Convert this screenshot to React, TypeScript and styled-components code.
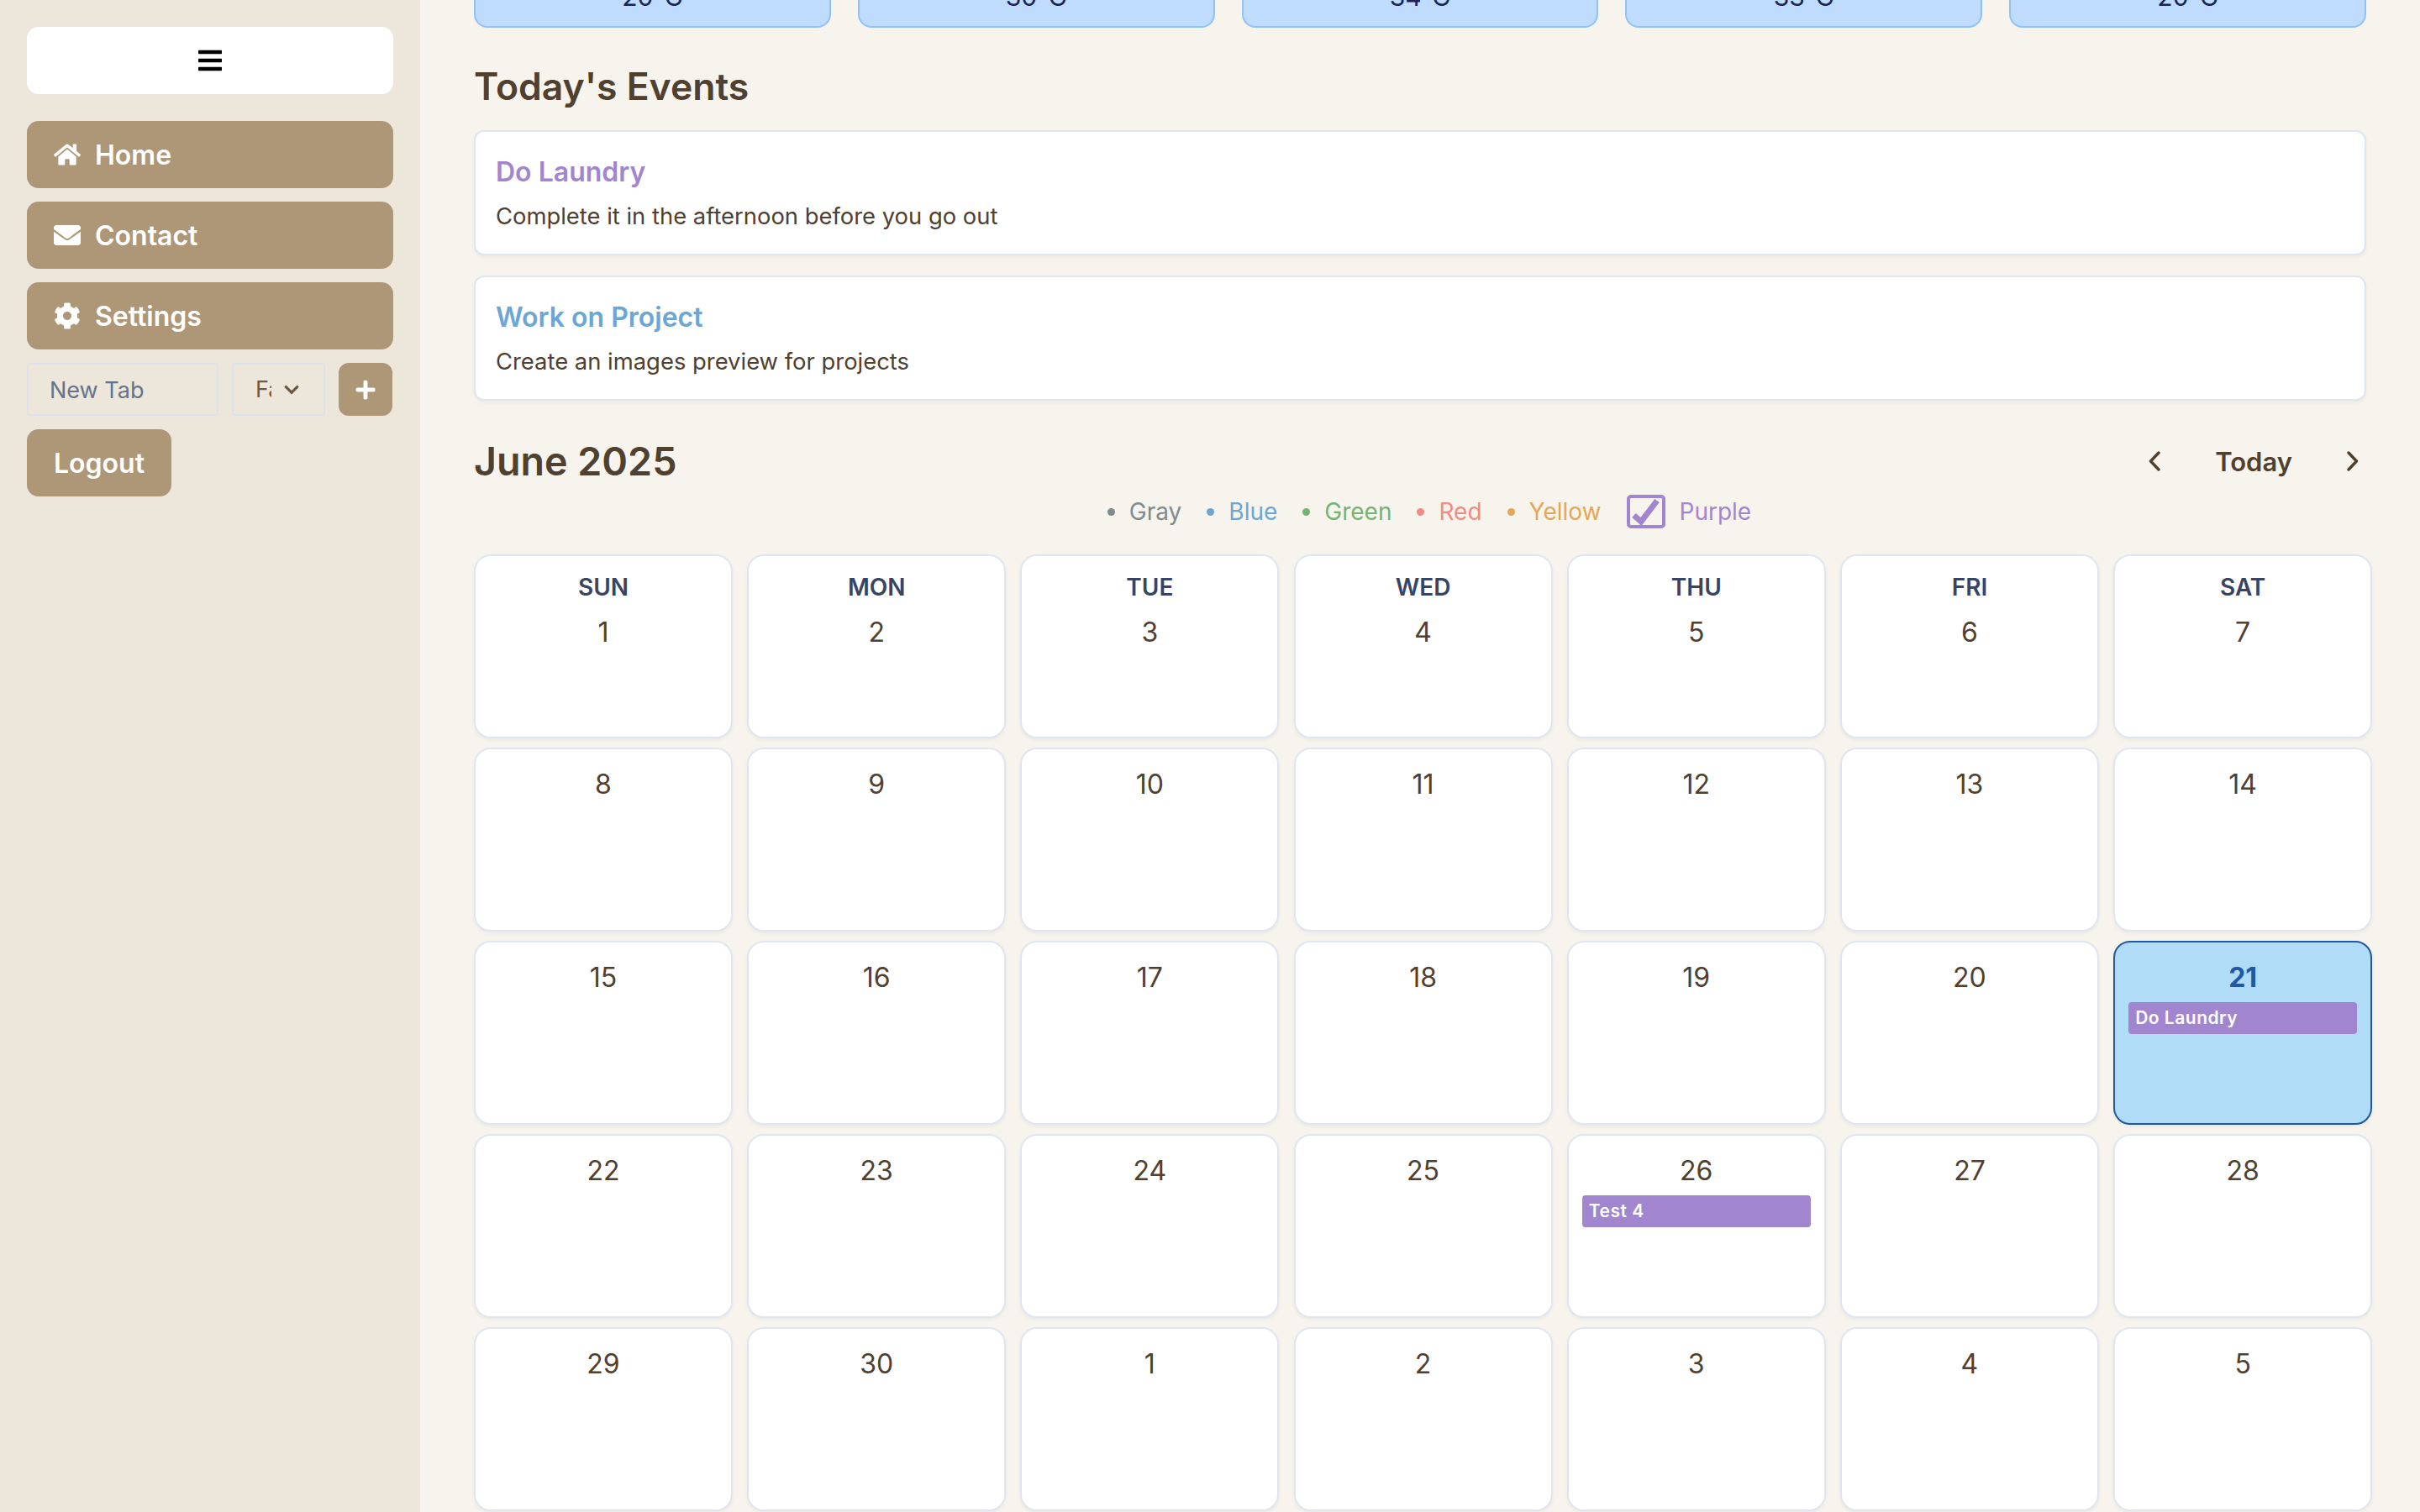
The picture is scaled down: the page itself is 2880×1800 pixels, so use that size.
import { useLayoutEffect, useRef } from 'react'
import styled, { createGlobalStyle } from 'styled-components'
import { FaBars, FaChevronDown, FaCog, FaEnvelope, FaHome, FaPlus } from 'react-icons/fa'

const COLORS: Record<string, string> = {
  gray: '#7f8c8d',
  blue: '#6ca6d4',
  green: '#75b374',
  red: '#f28b82',
  yellow: '#e3a857',
  purple: '#a285cf',
}

const NAV_ITEMS = [
  { label: 'Home', icon: <FaHome /> },
  { label: 'Contact', icon: <FaEnvelope /> },
  { label: 'Settings', icon: <FaCog /> },
]

const TEMPS = ['20°C', '30°C', '34°C', '33°C', '20°C']

const EVENTS = [
  { title: 'Do Laundry', body: 'Complete it in the afternoon before you go out', color: 'purple' },
  { title: 'Work on Project', body: 'Create an images preview for projects', color: 'blue' },
]

const LEGEND = [
  { label: 'Gray', color: 'gray' },
  { label: 'Blue', color: 'blue' },
  { label: 'Green', color: 'green' },
  { label: 'Red', color: 'red' },
  { label: 'Yellow', color: 'yellow' },
]

const WEEKDAYS = ['SUN', 'MON', 'TUE', 'WED', 'THU', 'FRI', 'SAT']

const DAYS = [
  1, 2, 3, 4, 5, 6, 7, 8, 9, 10, 11, 12, 13, 14, 15, 16, 17, 18, 19, 20, 21, 22, 23, 24, 25, 26, 27, 28, 29, 30, 1, 2,
  3, 4, 5,
]

const BARS: Record<number, string> = { 20: 'Do Laundry', 25: 'Test 4' }

function Chevron({ direction }: { direction: 'left' | 'right' }) {
  return (
    <ChevronIcon viewBox="0 0 14 24" aria-hidden="true">
      <path d={direction === 'left' ? 'M12 2L2.5 12L12 22' : 'M2 2L11.5 12L2 22'} />
    </ChevronIcon>
  )
}

export default function App() {
  const mainRef = useRef<HTMLElement>(null)

  // the reference is scrolled down past most of the weather row
  useLayoutEffect(() => {
    if (mainRef.current) mainRef.current.scrollTop = 200
  }, [])

  return (
    <>
      <GlobalStyle />
      <Layout>
        <Sidebar>
          <ToggleButton>
            <FaBars />
          </ToggleButton>
          {NAV_ITEMS.map((item) => (
            <NavButton key={item.label}>
              <NavIcon>{item.icon}</NavIcon>
              {item.label}
            </NavButton>
          ))}
          <TabRow>
            <TabInput placeholder="New Tab" readOnly />
            <IconSelect>
              <SelectText>Fa</SelectText>
              <FaChevronDown />
            </IconSelect>
            <AddButton>
              <FaPlus />
            </AddButton>
          </TabRow>
          <LogoutButton>Logout</LogoutButton>
        </Sidebar>
        <Main ref={mainRef}>
          <WeatherRow>
            {TEMPS.map((temp, i) => (
              <WeatherCard key={i}>{temp}</WeatherCard>
            ))}
          </WeatherRow>
          <SectionTitle>Today's Events</SectionTitle>
          <EventList>
            {EVENTS.map((event) => (
              <EventCard key={event.title}>
                <EventTitle $color={COLORS[event.color]}>{event.title}</EventTitle>
                <EventBody>{event.body}</EventBody>
              </EventCard>
            ))}
          </EventList>
          <CalendarHeader>
            <MonthTitle>June 2025</MonthTitle>
            <CalendarNav>
              <Chevron direction="left" />
              <TodayLabel>Today</TodayLabel>
              <Chevron direction="right" />
            </CalendarNav>
          </CalendarHeader>
          <Legend>
            {LEGEND.map((item) => (
              <LegendItem key={item.label} $color={COLORS[item.color]}>
                <LegendDot />
                {item.label}
              </LegendItem>
            ))}
            <LegendItem $color={COLORS.purple}>
              <CheckIcon viewBox="0 0 46 40" aria-hidden="true">
                <rect x="2" y="2" width="42" height="36" rx="3" />
                <polyline points="8.5,24.5 17,32 36,7" />
              </CheckIcon>
              Purple
            </LegendItem>
          </Legend>
          <CalendarGrid>
            {DAYS.map((day, i) => (
              <DayCell key={i} $today={i === 20}>
                {i < 7 && <Weekday>{WEEKDAYS[i]}</Weekday>}
                <DayNumber $today={i === 20}>{day}</DayNumber>
                {BARS[i] && <EventBar>{BARS[i]}</EventBar>}
              </DayCell>
            ))}
          </CalendarGrid>
        </Main>
      </Layout>
    </>
  )
}

const GlobalStyle = createGlobalStyle`
  * {
    box-sizing: border-box;
  }

  html,
  body {
    margin: 0;
    height: 100%;
    overflow: hidden;
  }

  body {
    font-family: Inter, "Liberation Sans", sans-serif;
    color: #4f4030;
  }
`

const Layout = styled.div`
  display: flex;
  height: 1800px;
`

const Sidebar = styled.aside`
  flex: 0 0 500px;
  display: flex;
  flex-direction: column;
  align-items: flex-start;
  gap: 16px;
  padding: 32px 32px 0;
  background: #ede6db;
`

const ToggleButton = styled.div`
  display: flex;
  align-items: center;
  justify-content: center;
  width: 100%;
  height: 80px;
  margin-bottom: 16px;
  border-radius: 14px;
  background: #ffffff;
  color: #000000;
  font-size: 32px;
`

const NavButton = styled.div`
  display: flex;
  align-items: center;
  gap: 17px;
  width: 100%;
  height: 80px;
  padding-left: 32px;
  border-radius: 14px;
  background: #ad9776;
  color: #ffffff;
  font-size: 32px;
  font-weight: 600;
`

const NavIcon = styled.span`
  display: flex;
  justify-content: center;
  width: 32px;
  font-size: 32px;
`

const TabRow = styled.div`
  display: flex;
  gap: 16px;
  width: 100%;
  height: 63px;
`

const TabInput = styled.input`
  width: 228px;
  padding: 2px 25px 0;
  border: 2px solid #dde3ed;
  border-radius: 4px;
  background: transparent;
  font-family: inherit;
  font-size: 27px;
  outline: none;

  &::placeholder {
    color: #64748b;
    opacity: 1;
  }
`

const IconSelect = styled.div`
  display: flex;
  align-items: center;
  gap: 14px;
  width: 111px;
  padding-left: 26px;
  border: 2px solid #dde3ed;
  border-radius: 4px;
  color: #6b5a43;
  font-size: 27px;

  svg {
    flex: 0 0 20px;
    font-size: 20px;
  }
`

const SelectText = styled.span`
  width: 19px;
  overflow: hidden;
`

const AddButton = styled.div`
  display: flex;
  align-items: center;
  justify-content: center;
  width: 64px;
  border-radius: 12px;
  background: #ad9776;
  color: #ffffff;
  font-size: 26px;
`

const LogoutButton = styled.div`
  display: flex;
  align-items: center;
  height: 80px;
  padding: 0 32px;
  border-radius: 14px;
  background: #ad9776;
  color: #ffffff;
  font-size: 32px;
  font-weight: 600;
`

const Main = styled.main`
  flex: 1;
  height: 1800px;
  padding: 0 64px 40px;
  overflow-y: auto;
  overflow-x: hidden;
  background: #f7f4ed;
  scrollbar-width: none;
`

const WeatherRow = styled.div`
  display: grid;
  grid-template-columns: repeat(5, 1fr);
  gap: 32px;
  width: 2252px;
`

const WeatherCard = styled.div`
  display: flex;
  align-items: flex-end;
  justify-content: center;
  height: 233px;
  padding-bottom: 17px;
  border: 2px solid #90c2fa;
  border-radius: 16px;
  background: #bfdbfe;
  color: #172554;
  font-size: 30px;
`

const SectionTitle = styled.h2`
  margin: 41px 0 0;
  font-size: 44.5px;
  font-weight: 600;
  line-height: 58px;
  color: #4f4030;
`

const EventList = styled.div`
  display: flex;
  flex-direction: column;
  gap: 24px;
  width: 2252px;
  margin-top: 23px;
`

const EventCard = styled.div`
  display: flex;
  flex-direction: column;
  justify-content: center;
  gap: 12px;
  height: 149px;
  padding: 1px 24px 0;
  border: 2px solid #e0e6f0;
  border-radius: 12px;
  background: #ffffff;
  box-shadow: 0 2px 4px rgba(0, 0, 0, 0.05);
`

const EventTitle = styled.div<{ $color: string }>`
  font-size: 32px;
  font-weight: 600;
  line-height: 42px;
  color: ${({ $color }) => $color};
`

const EventBody = styled.div`
  font-size: 27.4px;
  line-height: 38px;
  color: #4f4030;
`

const CalendarHeader = styled.div`
  display: flex;
  align-items: center;
  justify-content: space-between;
  width: 2252px;
  margin-top: 40px;
`

const MonthTitle = styled.h2`
  margin: 0;
  font-size: 46.6px;
  font-weight: 600;
  line-height: 64px;
  color: #4f4030;
`

const CalendarNav = styled.div`
  display: flex;
  align-items: center;
  gap: 65px;
  padding-right: 9px;
`

const ChevronIcon = styled.svg`
  width: 14px;
  height: 24px;
  fill: none;
  stroke: #4f4030;
  stroke-width: 3.4;
  stroke-linecap: round;
  stroke-linejoin: round;
`

const TodayLabel = styled.span`
  font-size: 31px;
  font-weight: 600;
  color: #4f4030;
`

const Legend = styled.div`
  display: flex;
  align-items: center;
  justify-content: center;
  gap: 30px;
  width: 2274px;
  height: 46px;
  margin-top: 5px;
`

const LegendItem = styled.span<{ $color: string }>`
  display: flex;
  align-items: center;
  gap: 17px;
  font-size: 28px;
  color: ${({ $color }) => $color};
`

const LegendDot = styled.span`
  width: 9px;
  height: 9px;
  border-radius: 50%;
  background: currentColor;
`

const CheckIcon = styled.svg`
  width: 46px;
  height: 40px;
  fill: none;
  stroke: currentColor;

  rect {
    stroke-width: 4;
  }

  polyline {
    stroke-width: 7;
  }
`

const CalendarGrid = styled.div`
  display: grid;
  grid-template-columns: repeat(7, 308px);
  grid-auto-rows: 219px;
  column-gap: 17.2px;
  row-gap: 11px;
  width: 2260px;
  margin-top: 28px;
`

const DayCell = styled.div<{ $today: boolean }>`
  display: flex;
  flex-direction: column;
  align-items: center;
  padding: 22px 16px 0;
  border: 2px solid ${({ $today }) => ($today ? '#2157a4' : '#e0e6f0')};
  border-radius: 20px;
  background: ${({ $today }) => ($today ? '#b0dcf7' : '#ffffff')};
  box-shadow: 0 2px 4px rgba(0, 0, 0, 0.05);
`

const Weekday = styled.div`
  margin: -2px 0 17px;
  font-size: 28px;
  font-weight: 600;
  line-height: 34px;
  color: #374463;
`

const DayNumber = styled.div<{ $today: boolean }>`
  font-size: 32px;
  line-height: 40px;
  font-weight: ${({ $today }) => ($today ? 700 : 400)};
  color: ${({ $today }) => ($today ? '#2157a4' : '#4f4030')};
`

const EventBar = styled.div`
  align-self: stretch;
  height: 38px;
  margin-top: 9px;
  padding: 0 8px;
  border-radius: 4px;
  background: #a285cf;
  color: #ffffff;
  font-size: 21px;
  font-weight: 600;
  line-height: 38px;
  letter-spacing: 0.5px;
`
